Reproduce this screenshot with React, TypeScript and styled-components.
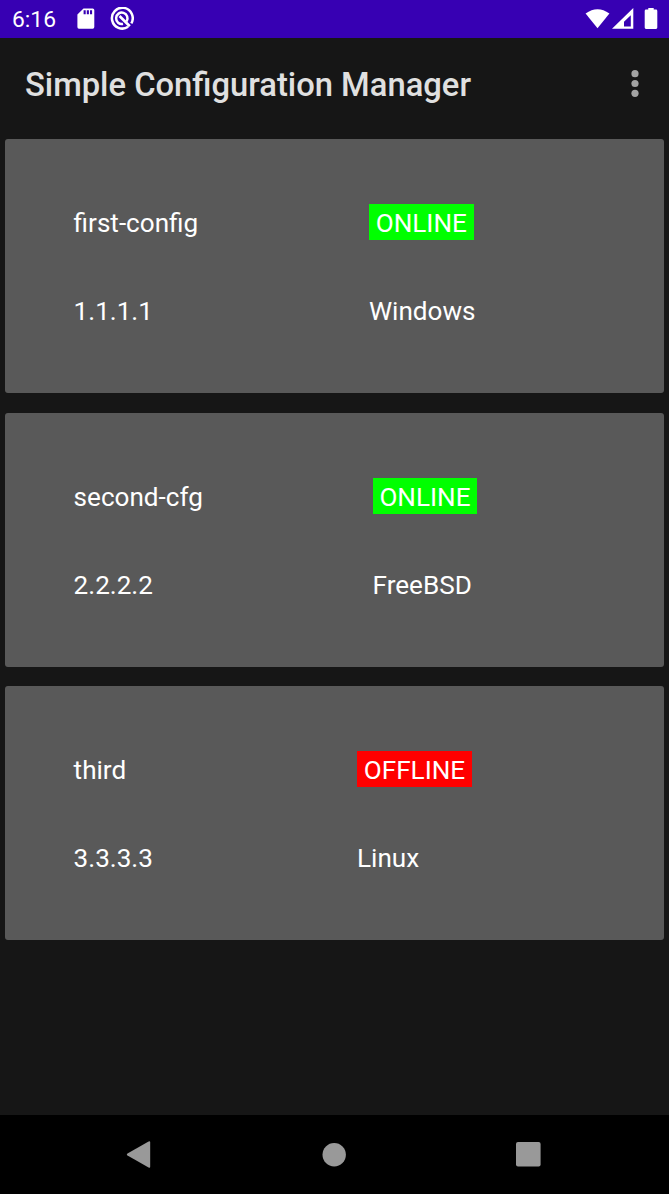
import React from "react";
import styled, { createGlobalStyle } from "styled-components";

const GlobalStyle = createGlobalStyle`
  * { box-sizing: border-box; }
  body { margin: 0; background: #161616; }
`;

const Screen = styled.div`
  display: flex;
  flex-direction: column;
  width: 100%;
  height: 1194px;
  background: #161616;
  font-family: Roboto, sans-serif;
  color: #fff;
`;

const StatusBar = styled.header`
  display: flex;
  align-items: center;
  height: 38px;
  padding: 0 11px 0 12px;
  background: #3700b3;
`;

const Clock = styled.span`
  width: 65px;
  padding-top: 1px;
  font-size: 22.8px;
  line-height: 38px;
`;

const StatusIcon = styled.svg<{ $gap?: number }>`
  display: block;
  flex: none;
  margin-right: ${(p) => p.$gap ?? 0}px;
`;

const Spacer = styled.div`
  flex: 1;
`;

const AppBar = styled.div`
  display: flex;
  align-items: center;
  justify-content: space-between;
  height: 91px;
  padding: 0 28.5px 0 25px;
`;

const Title = styled.h1`
  margin: 2px 0 0;
  font-size: 32.75px;
  font-weight: 500;
  line-height: 40px;
  color: #e0e0e0;
  white-space: nowrap;
`;

const MenuButton = styled.button`
  display: block;
  padding: 0;
  border: 0;
  background: none;
`;

const CardList = styled.main`
  display: flex;
  flex: 1;
  flex-direction: column;
  gap: 19.5px;
  padding: 10px 5px 0;
`;

const Card = styled.section<{ $offset: number }>`
  display: grid;
  grid-template-columns: ${(p) => p.$offset}px 1fr;
  grid-template-rows: 35px 35px;
  row-gap: 53px;
  height: 254px;
  padding: 66px 69px 0 68.6px;
  border-radius: 3px;
  background: #595959;
`;

const Label = styled.span`
  font-size: 26.1px;
  line-height: 36px;
  white-space: nowrap;
`;

const Badge = styled(Label)<{ $online: boolean }>`
  justify-self: start;
  height: 36px;
  margin-top: -1px;
  padding: 1px 6.8px 0;
  background: ${(p) => (p.$online ? "#00ff00" : "#ff0000")};
`;

const NavBar = styled.nav`
  display: flex;
  align-items: center;
  justify-content: space-between;
  height: 79px;
  padding: 0 128px 0 126px;
  background: #000;
`;

interface Config {
  name: string;
  ip: string;
  online: boolean;
  os: string;
  offset: number;
}

const configs: Config[] = [
  { name: "first-config", ip: "1.1.1.1", online: true, os: "Windows", offset: 295.3 },
  { name: "second-cfg", ip: "2.2.2.2", online: true, os: "FreeBSD", offset: 299 },
  { name: "third", ip: "3.3.3.3", online: false, os: "Linux", offset: 283.4 },
];

export default function App() {
  return (
    <>
      <GlobalStyle />
      <Screen>
        <StatusBar>
          <Clock>6:16</Clock>
          <StatusIcon $gap={15} width="18" height="22" viewBox="0 0 18 22" fill="#fff">
            <path
              fillRule="evenodd"
              d="M6.5 .4H15.7A1.6 1.6 0 0 1 17.3 2V19.1A1.6 1.6 0 0 1 15.7 20.7H2A1.6 1.6 0 0 1 .4 19.1V6.5ZM6.6 2.2v4h2.1V2.2ZM9.8 2.2v4h2.1V2.2ZM13 2.2v4h2.1V2.2Z"
            />
          </StatusIcon>
          <StatusIcon width="24" height="24" viewBox="0 0 24 24" fill="none" stroke="#fff">
            <path d="M21.3 16.4A10.4 10.4 0 1 0 18.1 19.8" strokeWidth="2.5" />
            <path d="M16.6 14.4A5.7 5.7 0 1 0 13 16.9" strokeWidth="2.5" />
            <path d="M9.5 9L19.8 19.2" strokeWidth="2.7" />
          </StatusIcon>
          <Spacer />
          <StatusIcon $gap={2} width="25" height="22" viewBox="0 0 26 22" fill="#fff">
            <path d="M.6 5.2Q13-3.7 25.4 5.2L13 20.5Z" />
          </StatusIcon>
          <StatusIcon $gap={10} width="22" height="22" viewBox="0 0 22 22" fill="#fff">
            <path fillRule="evenodd" d="M0 20.7 21.3.1V20.7ZM12 18.4H18.8V7.2L12 13.8Z" />
          </StatusIcon>
          <StatusIcon width="14" height="22" viewBox="0 0 14 22" fill="#fff">
            <path d="M4.3 0H9.7V1.6H12a1.3 1.3 0 0 1 1.3 1.3V19.6A1.3 1.3 0 0 1 12 20.9H2A1.3 1.3 0 0 1 .7 19.6V2.9A1.3 1.3 0 0 1 2 1.6H4.3Z" />
          </StatusIcon>
        </StatusBar>
        <AppBar>
          <Title>Simple Configuration Manager</Title>
          <MenuButton aria-label="More options">
            <StatusIcon width="12" height="30" viewBox="0 0 12 30" fill="#a3a3a3">
              <circle cx="6" cy="4.7" r="3.6" />
              <circle cx="6" cy="14.5" r="3.6" />
              <circle cx="6" cy="24.3" r="3.6" />
            </StatusIcon>
          </MenuButton>
        </AppBar>
        <CardList>
          {configs.map((c) => (
            <Card key={c.name} $offset={c.offset}>
              <Label>{c.name}</Label>
              <Badge $online={c.online}>{c.online ? "ONLINE" : "OFFLINE"}</Badge>
              <Label>{c.ip}</Label>
              <Label>{c.os}</Label>
            </Card>
          ))}
        </CardList>
        <NavBar>
          <StatusIcon width="25" height="28" viewBox="0 0 25 28" fill="#999">
            <path d="M22.6.5Q24.2-.3 24.2 1.4V25.6Q24.2 27.4 22.6 26.6L1.5 14.6Q.2 13.5 1.5 12.4Z" />
          </StatusIcon>
          <StatusIcon width="24" height="24" viewBox="0 0 24 24" fill="#999">
            <circle cx="12.2" cy="11.8" r="11.7" />
          </StatusIcon>
          <StatusIcon width="25" height="25" viewBox="0 0 25 25" fill="#999">
            <rect width="24.6" height="24.6" rx="2" />
          </StatusIcon>
        </NavBar>
      </Screen>
    </>
  );
}
